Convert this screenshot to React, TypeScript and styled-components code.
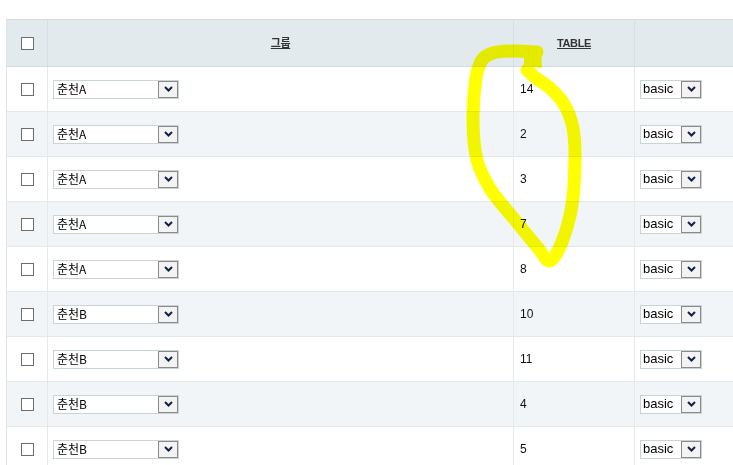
import React from "react";
import styled, { createGlobalStyle } from "styled-components";

const GlobalStyle = createGlobalStyle`
  html, body {
    margin: 0;
    padding: 0;
    background: #ffffff;
    overflow: hidden;
    width: 733px;
    height: 465px;
  }
  body {
    font-family: "Liberation Sans", "Noto Sans CJK KR", sans-serif;
    font-size: 12px;
    color: #111;
  }
`;

const Page = styled.div`
  position: relative;
  width: 733px;
  height: 465px;
  overflow: hidden;
  padding: 19px 0 0 6px;
  box-sizing: border-box;
`;

const Table = styled.div`
  width: 860px;
  border-left: 1px solid #dde5e8;
  border-top: 1px solid #d3dde1;
`;

const Row = styled.div<{ $striped?: boolean; $head?: boolean }>`
  display: grid;
  grid-template-columns: 41px 466px 121px 1fr;
  height: ${(p) => (p.$head ? "47px" : "45px")};
  box-sizing: border-box;
  background: ${(p) => (p.$head ? "#e3eaed" : p.$striped ? "#f1f5f8" : "#ffffff")};
  border-bottom: 1px solid ${(p) => (p.$head ? "#d3dde1" : "#e3e8eb")};
`;

const Cell = styled.div<{ $center?: boolean; $head?: boolean }>`
  box-sizing: border-box;
  border-right: 1px solid ${(p) => (p.$head ? "#d6e0e4" : "#e4e9ec")};
  display: flex;
  align-items: center;
  justify-content: ${(p) => (p.$center ? "center" : "flex-start")};
  padding: 0 5px;
`;

const HeadLabel = styled.span`
  font-family: "Liberation Sans", "Noto Sans CJK KR", sans-serif;
  font-size: 11px;
  line-height: 1;
  font-weight: bold;
  letter-spacing: -0.4px;
  color: #333;
  text-decoration: underline;
  text-underline-offset: 1px;
  margin-top: 1px;
`;

const Check = styled.span`
  display: block;
  width: 13px;
  height: 13px;
  box-sizing: border-box;
  border: 1px solid #6e6e6e;
  background: #fff;
  margin-left: 9px;
  margin-top: 1px;
`;

const NumText = styled.span`
  font-family: "Liberation Sans", sans-serif;
  font-size: 12px;
  color: #111;
  padding-left: 1px;
  margin-top: -1px;
`;

const SelectBox = styled.div<{ $w: number }>`
  width: ${(p) => p.$w}px;
  height: 19px;
  box-sizing: border-box;
  border: 1px solid #c9d4d9;
  background: #fff;
  display: flex;
  align-items: stretch;
`;

const SelectText = styled.span<{ $latin?: boolean }>`
  flex: 1;
  display: flex;
  align-items: center;
  line-height: 1;
  padding-left: ${(p) => (p.$latin ? "2px" : "3px")};
  padding-bottom: 1px;
  font-family: ${(p) =>
    p.$latin ? `"Liberation Sans", sans-serif` : `"Noto Sans CJK KR", sans-serif`};
  font-size: ${(p) => (p.$latin ? "13px" : "12px")};
  color: #000;
  white-space: nowrap;
  overflow: hidden;
`;

const DropButton = styled.span`
  width: 20px;
  box-sizing: border-box;
  border: 1px solid #8a8a8a;
  background: #f3f3f3;
  display: flex;
  align-items: center;
  justify-content: center;
`;

const Overlay = styled.svg`
  position: absolute;
  left: 0;
  top: 0;
  width: 733px;
  height: 465px;
  pointer-events: none;
  mix-blend-mode: multiply;
`;

const Chevron = () => (
  <svg width="9" height="6" viewBox="0 0 9 6">
    <polyline points="1,1 4.5,4.5 8,1" fill="none" stroke="#13204a" strokeWidth="2" />
  </svg>
);

const Select = ({ value, width, latin }: { value: string; width: number; latin?: boolean }) => (
  <SelectBox $w={width}>
    <SelectText $latin={latin}>{value}</SelectText>
    <DropButton>
      <Chevron />
    </DropButton>
  </SelectBox>
);

const rows = [
  { g: "춘천A", t: "14" },
  { g: "춘천A", t: "2" },
  { g: "춘천A", t: "3" },
  { g: "춘천A", t: "7" },
  { g: "춘천A", t: "8" },
  { g: "춘천B", t: "10" },
  { g: "춘천B", t: "11" },
  { g: "춘천B", t: "4" },
  { g: "춘천B", t: "5" },
];

type P = [number, number];
const smooth = (pts: P[]) => {
  let d = `M ${pts[0][0]} ${pts[0][1]}`;
  for (let i = 0; i < pts.length - 1; i++) {
    const p0 = pts[i - 1] || pts[i];
    const p1 = pts[i];
    const p2 = pts[i + 1];
    const p3 = pts[i + 2] || p2;
    const c1x = p1[0] + (p2[0] - p0[0]) / 6;
    const c1y = p1[1] + (p2[1] - p0[1]) / 6;
    const c2x = p2[0] - (p3[0] - p1[0]) / 6;
    const c2y = p2[1] - (p3[1] - p1[1]) / 6;
    d += ` C ${c1x} ${c1y} ${c2x} ${c2y} ${p2[0]} ${p2[1]}`;
  }
  return d;
};

const loop: P[] = [
  [537, 52],
  [512, 51],
  [493, 53],
  [482, 60],
  [476, 78],
  [473, 120],
  [477, 160],
  [491, 190],
  [515, 220],
  [538, 248],
  [550, 261],
  [562, 242],
  [572, 205],
  [575, 160],
  [573, 128],
  [564, 104],
  [550, 88],
  [536, 78],
  [527, 70],
];

export default function App() {
  return (
    <>
      <GlobalStyle />
      <Page>
        <Table>
          <Row $head>
            <Cell $head>
              <Check />
            </Cell>
            <Cell $head $center>
              <HeadLabel>그룹</HeadLabel>
            </Cell>
            <Cell $head $center>
              <HeadLabel>TABLE</HeadLabel>
            </Cell>
            <Cell $head />
          </Row>
          {rows.map((r, i) => (
            <Row key={i} $striped={i % 2 === 1}>
              <Cell>
                <Check />
              </Cell>
              <Cell>
                <Select value={r.g} width={126} />
              </Cell>
              <Cell>
                <NumText>{r.t}</NumText>
              </Cell>
              <Cell>
                <Select value="basic" width={62} latin />
              </Cell>
            </Row>
          ))}
        </Table>
        <Overlay viewBox="0 0 733 465">
          <path
            d={smooth(loop)}
            fill="none"
            stroke="#ffff00"
            strokeWidth="13"
            strokeLinecap="round"
            strokeLinejoin="round"
          />
          <path d="M 524 47 L 541 47 L 542 68 L 524 66 Z" fill="#ffff00" />
        </Overlay>
      </Page>
    </>
  );
}
